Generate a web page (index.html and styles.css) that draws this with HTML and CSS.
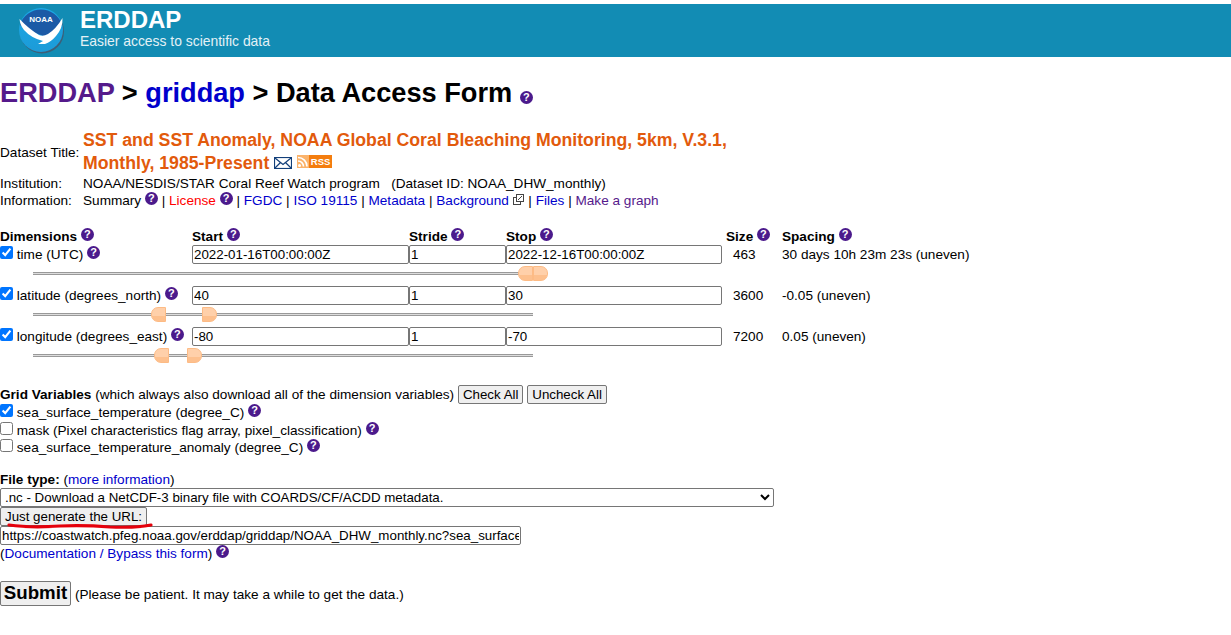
FILE: index.html
```html
<!DOCTYPE html>
<html lang="en">
<head>
  <meta charset="UTF-8">
  <title>ERDDAP - Data Access Form</title>
  <link rel="stylesheet" href="styles.css">
</head>
<body>
  <div class="banner">
    <svg class="logo" width="50" height="50" viewBox="0 0 50 50">
      <defs>
        <linearGradient id="sea" x1="0" y1="0" x2="0" y2="1">
          <stop offset="0" stop-color="#1ba8e6"/>
          <stop offset="1" stop-color="#1c9bd8"/>
        </linearGradient>
      </defs>
      <circle cx="25" cy="25.5" r="22" fill="#3d5f78"/>
      <circle cx="24" cy="24" r="22" fill="url(#sea)"/>
      <path d="M3 19 A22 22 0 0 1 45 19 Q36 26 31 30 Q27 31 24 29 Q14 26 3 19 Z" fill="#1c5aa6"/>
      <path d="M2.5 13 Q12 23 22 29 Q26 31 31 28 Q39 23 45.500 12 Q46 22 39 30 Q34 36 28 38 L21 38 L26 35 Q14 32 7 24 Q3 19 2.500 13 Z" fill="#fff"/>
      <text x="24" y="15.500" class="logo-text" text-anchor="middle">NOAA</text>
    </svg>
    <div class="banner-text">
      <div class="banner-title">ERDDAP</div>
      <div class="banner-sub">Easier access to scientific data</div>
    </div>
  </div>

  <h1 class="page-title"><a class="visited" href="#">ERDDAP</a> &gt; <a href="#">griddap</a> &gt; Data Access Form <span class="help help-big">?</span></h1>

  <div class="info">
    <div class="info-label info-mid">Dataset Title:</div>
    <div class="dataset-title">SST and SST Anomaly, NOAA Global Coral Bleaching Monitoring, 5km, V.3.1,<br>Monthly, 1985-Present
      <svg class="mail" width="18" height="12" viewBox="0 0 18 12"><rect x="0.5" y="0.5" width="17" height="11" fill="#fff" stroke="#123f7a" stroke-width="1.200"/><path d="M1 1 L9 7.500 L17 1 M1 11 L6.500 5.500 M17 11 L11.500 5.500" fill="none" stroke="#123f7a" stroke-width="1.200"/></svg>
      <span class="rss"><span class="rss-icon"><svg width="12" height="13" viewBox="0 0 12 13"><circle cx="2.500" cy="10.500" r="1.500" fill="#fff"/><path d="M1 6 A5.500 5.500 0 0 1 6.500 11.500 M1 2.500 A9 9 0 0 1 10 11.500" fill="none" stroke="#fff" stroke-width="1.600"/></svg></span><span class="rss-text">RSS</span></span>
    </div>
    <div class="info-label">Institution:</div>
    <div>NOAA/NESDIS/STAR Coral Reef Watch program &nbsp; (Dataset ID: NOAA_DHW_monthly)</div>
    <div class="info-label">Information:</div>
    <div>Summary <span class="help">?</span> | <a class="red" href="#">License</a> <span class="help">?</span> | <a href="#">FGDC</a> | <a href="#">ISO 19115</a> | <a href="#">Metadata</a> | <a href="#">Background</a>
      <svg class="ext" width="11" height="11" viewBox="0 0 11 11"><rect x="0.5" y="3.500" width="7" height="7" fill="#fff" stroke="#444"/><rect x="3.500" y="0.500" width="7" height="7" fill="#fff" stroke="#444"/><path d="M5 6 L9 2" stroke="#444"/></svg>
      | <a href="#">Files</a> | <a class="visited" href="#">Make a graph</a></div>
  </div>

  <div class="dims">
    <div class="dims-head">
      <div>Dimensions <span class="help">?</span></div>
      <div>Start <span class="help">?</span></div>
      <div>Stride <span class="help">?</span></div>
      <div>Stop <span class="help">?</span></div>
      <div>Size <span class="help">?</span></div>
      <div>Spacing <span class="help">?</span></div>
    </div>

    <div class="dim-row">
      <div class="dim-name"><input type="checkbox" checked> time (UTC) <span class="help">?</span></div>
      <input class="field" type="text" value="2022-01-16T00:00:00Z">
      <input class="field" type="text" value="1">
      <input class="field" type="text" value="2022-12-16T00:00:00Z">
      <div class="dim-size">463</div>
      <div>30 days 10h 23m 23s (uneven)</div>
    </div>
    <div class="slider">
      <span class="handle handle-l" style="left: 485px"></span>
      <span class="handle handle-r" style="left: 500px"></span>
    </div>

    <div class="dim-row">
      <div class="dim-name"><input type="checkbox" checked> latitude (degrees_north) <span class="help">?</span></div>
      <input class="field" type="text" value="40">
      <input class="field" type="text" value="1">
      <input class="field" type="text" value="30">
      <div class="dim-size">3600</div>
      <div>-0.05 (uneven)</div>
    </div>
    <div class="slider">
      <span class="handle handle-l" style="left: 118px"></span>
      <span class="handle handle-r" style="left: 169px"></span>
    </div>

    <div class="dim-row">
      <div class="dim-name"><input type="checkbox" checked> longitude (degrees_east) <span class="help">?</span></div>
      <input class="field" type="text" value="-80">
      <input class="field" type="text" value="1">
      <input class="field" type="text" value="-70">
      <div class="dim-size">7200</div>
      <div>0.05 (uneven)</div>
    </div>
    <div class="slider">
      <span class="handle handle-l" style="left: 121px"></span>
      <span class="handle handle-r" style="left: 154px"></span>
    </div>
  </div>

  <div class="grid-vars">
    <div class="vars-head"><b>Grid Variables</b> (which always also download all of the dimension variables) <button class="btn" type="button">Check All</button> <button class="btn" type="button">Uncheck All</button></div>
    <div class="var-row"><input type="checkbox" checked> sea_surface_temperature (degree_C) <span class="help">?</span></div>
    <div class="var-row"><input type="checkbox"> mask (Pixel characteristics flag array, pixel_classification) <span class="help">?</span></div>
    <div class="var-row"><input type="checkbox"> sea_surface_temperature_anomaly (degree_C) <span class="help">?</span></div>
  </div>

  <div class="file-type">
    <div><b>File type:</b> (<a href="#">more information</a>)</div>
    <select class="type-select"><option>.nc - Download a NetCDF-3 binary file with COARDS/CF/ACDD metadata.</option></select>
    <div class="url-btn-wrap">
      <button class="btn btn-block" type="button">Just generate the URL:</button>
      <svg class="scribble" width="160" height="12" viewBox="0 0 160 12"><path d="M9 5 Q30 8 60 6 Q85 5 110 7 Q135 8 151 5" fill="none" stroke="#e5000b" stroke-width="3.200" stroke-linecap="round"/></svg>
    </div>
    <input class="url-field" type="text" value="https://coastwatch.pfeg.noaa.gov/erddap/griddap/NOAA_DHW_monthly.nc?sea_surface_temperature">
    <div class="doc-line">(<a href="#">Documentation / Bypass this form</a>) <span class="help">?</span></div>
  </div>

  <div class="submit-row">
    <button class="submit" type="button">Submit</button>
    <span class="submit-note">(Please be patient. It may take a while to get the data.)</span>
  </div>
</body>
</html>
```

FILE: styles.css
```css
body {
  margin: 0;
  padding-top: 4px;
  background: #fff;
  color: #000;
  font-family: "Liberation Sans", Arial, sans-serif;
  font-size: 13.6px;
  line-height: 15px;
}
a {
  color: #0000cc;
  text-decoration: none;
}
a.visited {
  color: #551a8b;
}
a.red {
  color: #f00;
}

.banner {
  display: flex;
  align-items: center;
  height: 53px;
  background-color: #128cb4;
  color: #fff;
}
.logo {
  margin-left: 17px;
  flex: none;
}
.logo-text {
  font-family: "Liberation Sans", sans-serif;
  font-size: 8px;
  font-weight: bold;
  fill: #fff;
}
.banner-text {
  align-self: flex-start;
  margin: 4px 0 0 13px;
}
.banner-title {
  font-size: 24px;
  font-weight: bold;
  line-height: 24px;
}
.banner-sub {
  margin-top: 1px;
  font-size: 13.9px;
  line-height: 16px;
  color: #e4f1f6;
}

.page-title {
  margin: 20px 0 0;
  font-size: 27.2px;
  line-height: 32px;
  font-weight: bold;
}

.help {
  display: inline-block;
  width: 13px;
  height: 13px;
  margin: -4px 0;
  border-radius: 50%;
  background: #4b1a8c;
  color: #fff;
  font-size: 11px;
  font-weight: bold;
  line-height: 13px;
  text-align: center;
  vertical-align: 3px;
}
.help-big {
  vertical-align: 1px;
}

.info {
  display: grid;
  grid-template-columns: 83px 660px;
  margin-top: 20px;
  line-height: 17px;
}
.info-mid {
  align-self: center;
}
.dataset-title {
  color: #e25a0c;
  font-size: 17.68px;
  font-weight: bold;
  line-height: 22.5px;
  margin-bottom: 1px;
}
.mail {
  vertical-align: 0;
}
.rss {
  display: inline-flex;
  height: 13px;
  width: 35px;
  background: #f47d0e;
  color: #fff;
  vertical-align: 1px;
}
.rss-icon {
  display: flex;
  width: 12px;
  background: #fbb36b;
}
.rss-text {
  flex: 1;
  font-size: 9.5px;
  line-height: 13px;
  text-align: center;
}
.ext {
  vertical-align: 0;
  margin-right: 1px;
}

.dims {
  margin-top: 19px;
}
.dims-head,
.dim-row {
  display: grid;
  grid-template-columns: 192px 217px 97px 220px 56px auto;
  align-items: center;
}
.dims-head {
  font-weight: bold;
  height: 17px;
}
.dim-row {
  height: 19px;
}
.dim-name input,
.var-row input {
  margin: -2px 0 0;
  width: 13px;
  height: 13px;
  vertical-align: 0;
}
.dim-size {
  padding-left: 7px;
}
.field {
  box-sizing: border-box;
  width: 100%;
  height: 19px;
  margin: 0;
  padding: 0 1px;
  border: 1px solid #767676;
  border-radius: 2px;
  font: 13.33px "Liberation Sans", Arial, sans-serif;
}
.dim-row .field:nth-child(4) {
  width: 216px;
}
.slider {
  position: relative;
  box-sizing: border-box;
  width: 500px;
  height: 3px;
  margin: 8px 0 11px 33px;
  border-top: 1px solid #999;
  border-bottom: 1px solid #999;
  background: #ddd;
}
.handle {
  position: absolute;
  top: -7px;
  width: 15px;
  height: 15px;
  box-sizing: border-box;
  border: 1px solid #fdbb85;
  background: linear-gradient(#ffd0aa 60%, #fdc08e 60%);
}
.handle-l {
  border-radius: 7px 0 0 7px;
}
.handle-r {
  border-radius: 0 7px 7px 0;
}

.grid-vars {
  margin-top: 28px;
}
.vars-head {
  height: 20px;
}
.var-row {
  height: 17.5px;
}
.btn {
  box-sizing: border-box;
  height: 19px;
  margin: 0;
  padding: 0 4px;
  border: 1px solid #767676;
  border-radius: 2px;
  background: #efefef;
  color: #000;
  font: 13.33px "Liberation Sans", Arial, sans-serif;
  white-space: nowrap;
}

.file-type {
  margin-top: 14px;
}
.type-select {
  display: block;
  box-sizing: border-box;
  width: 774px;
  height: 19px;
  margin: 1px 0 0;
  font: 13.33px "Liberation Sans", Arial, sans-serif;
  background: #fff;
  border: 1px solid #767676;
  border-radius: 2px;
}
.url-btn-wrap {
  position: relative;
  height: 19px;
}
.btn-block {
  display: block;
  width: 147px;
  padding: 0;
}
.scribble {
  position: absolute;
  left: 0;
  top: 13px;
}
.url-field {
  display: block;
  box-sizing: border-box;
  width: 521px;
  height: 19px;
  margin: 0;
  padding: 0 1px;
  border: 1px solid #767676;
  border-radius: 2px;
  font: 13.33px "Liberation Sans", Arial, sans-serif;
}
.doc-line {
  margin-top: 1px;
}

.submit-row {
  display: flex;
  align-items: center;
  gap: 4px;
  margin-top: 20px;
}
.submit {
  box-sizing: border-box;
  width: 71px;
  height: 25px;
  margin: 0;
  padding: 0;
  border: 1px solid #767676;
  border-radius: 2px;
  background: #efefef;
  font: bold 18.7px "Liberation Sans", Arial, sans-serif;
}
.submit-note {
  margin-top: 2px;
}
```
